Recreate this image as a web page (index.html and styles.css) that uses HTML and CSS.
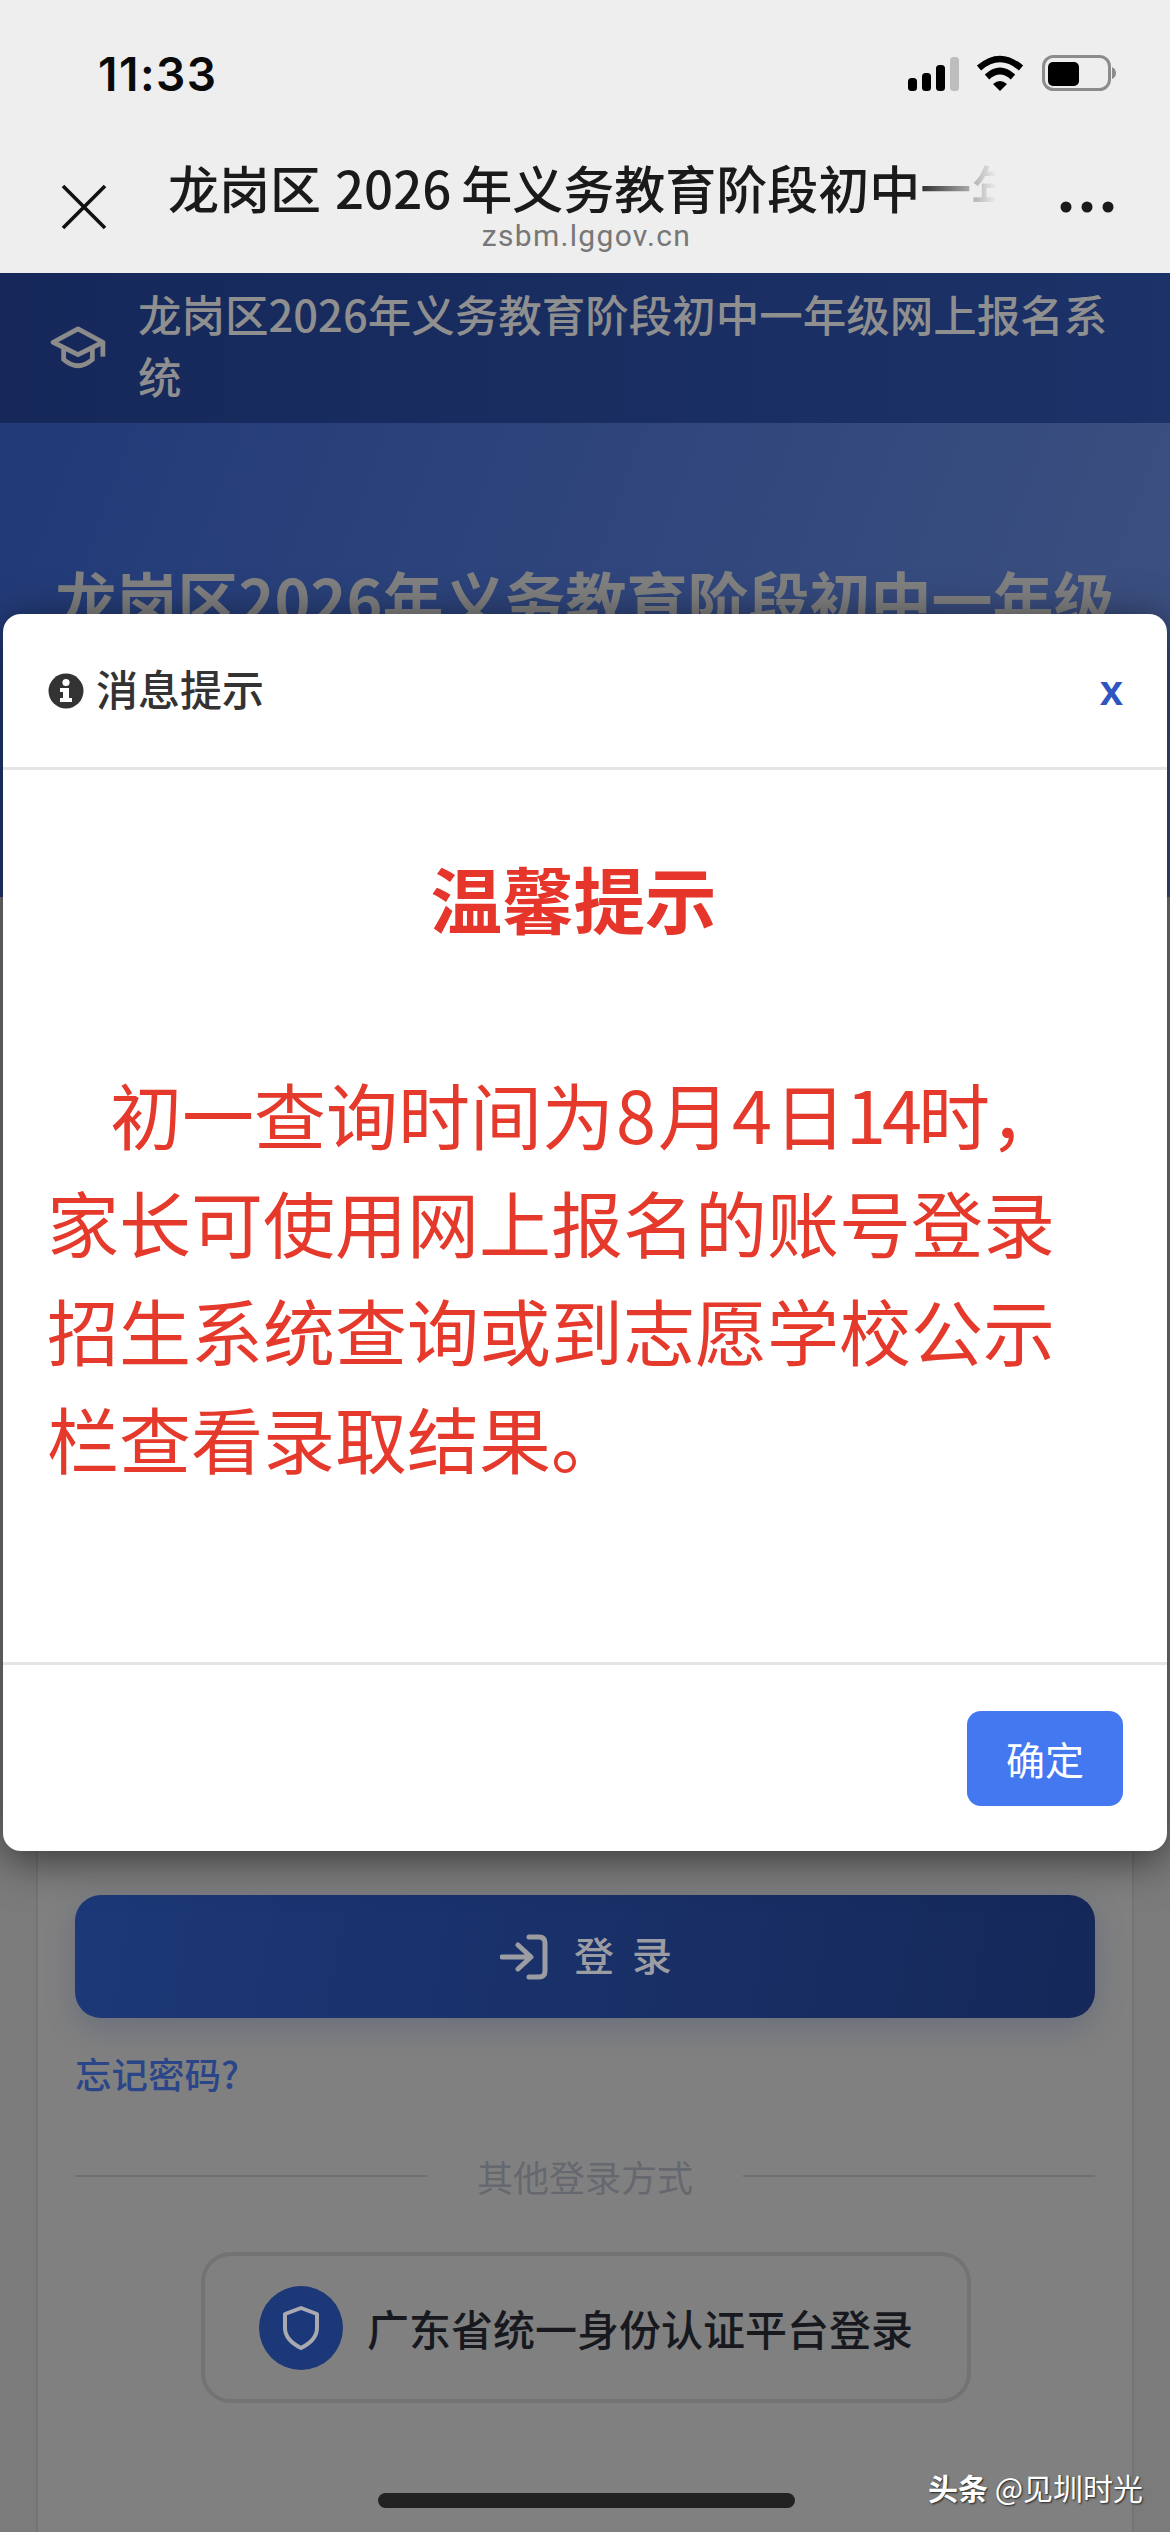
FILE: index.html
```html
<!DOCTYPE html>
<html lang="zh-CN">
<head>
  <meta charset="UTF-8" />
  <meta name="viewport" content="width=device-width, initial-scale=1.0"/>
  <title>龙岗区2026年义务教育阶段初中一年级网上报名系统</title>
  <link rel="stylesheet" href="styles.css">
</head>
<body>
  <div class="phone-top">
    <div class="status-bar">
      <span class="time">11:33</span>
      <div class="status-icons">
        <svg class="signal" width="51" height="34" viewBox="0 0 51 34">
          <rect x="0" y="21" width="9" height="13" rx="3.5" fill="#000"/>
          <rect x="14" y="16" width="9" height="18" rx="3.5" fill="#000"/>
          <rect x="28" y="8" width="9" height="26" rx="3.5" fill="#000"/>
          <rect x="42" y="0" width="9" height="34" rx="3.5" fill="#bdbdbd"/>
        </svg>
        <svg class="wifi" width="48" height="36" viewBox="0 0 48 36">
          <path d="M3 13Q24 -5 45 13" fill="none" stroke="#000" stroke-width="6.5"/>
          <path d="M11 22Q24 10 37 22" fill="none" stroke="#000" stroke-width="6.5"/>
          <path d="M17 29Q24 23 31 29L24 36Z" fill="#000"/>
        </svg>
        <svg class="battery" width="75" height="36" viewBox="0 0 75 36">
          <rect x="1.5" y="1.5" width="66" height="33" rx="10" fill="none" stroke="#8c8c8c" stroke-width="3"/>
          <rect x="6" y="7" width="31" height="24" rx="5" fill="#000"/>
          <path d="M70 12Q74 14 74 18Q74 22 70 24Z" fill="#8c8c8c"/>
        </svg>
      </div>
    </div>
    <div class="nav-bar">
      <svg class="nav-close" width="46" height="46" viewBox="0 0 46 46">
        <path d="M2 2L44 44M44 2L2 44" fill="none" stroke="#111" stroke-width="3.6"/>
      </svg>
      <div class="nav-center">
        <div class="nav-title">龙岗区<span class="nav-num">2026</span>年义务教育阶段初中一年级网上报名系统</div>
        <div class="nav-url">zsbm.lggov.cn</div>
      </div>
      <svg class="nav-more" width="58" height="12" viewBox="0 0 58 12">
        <circle cx="6" cy="6" r="5.5" fill="#1a1a1a"/>
        <circle cx="27" cy="6" r="5.5" fill="#1a1a1a"/>
        <circle cx="48" cy="6" r="5.5" fill="#1a1a1a"/>
      </svg>
    </div>
  </div>

  <div class="webview">
    <header class="site-header">
      <svg class="cap-icon" width="56" height="44" viewBox="0 0 58 46">
        <path d="M29 3L55 17L29 30L3 17Z" fill="none" stroke="#8b8b8b" stroke-width="5" stroke-linejoin="round"/>
        <path d="M14 24V35Q29 48 44 35V24" fill="none" stroke="#8b8b8b" stroke-width="5"/>
        <path d="M55 17V32" fill="none" stroke="#8b8b8b" stroke-width="5"/>
      </svg>
      <div class="site-name">龙岗区2026年义务教育阶段初中一年级网上报名系统</div>
    </header>

    <section class="hero">
      <h1 class="hero-title">龙岗区2026年义务教育阶段初中一年级网上报名系统</h1>
    </section>

    <main class="login-card">
      <button class="login-btn" type="button">
        <svg width="48" height="46" viewBox="0 0 48 46">
          <path d="M2 23H30M18 11L31 23L18 35" fill="none" stroke="#9c9da3" stroke-width="5" stroke-linecap="round" stroke-linejoin="round"/>
          <path d="M29 3H39Q45 3 45 9V37Q45 43 39 43H29" fill="none" stroke="#9c9da3" stroke-width="5" stroke-linecap="round"/>
        </svg>
        <span class="login-text">登录</span>
      </button>
      <a class="forgot" href="#">忘记密码?</a>
      <div class="divider"><span>其他登录方式</span></div>
      <button class="alt-login" type="button">
        <span class="shield-badge">
          <svg width="38" height="46" viewBox="0 0 38 46">
            <path d="M19 3L35 9V23Q35 35 19 43Q3 35 3 23V9Z" fill="none" stroke="#a8aab0" stroke-width="4" stroke-linejoin="round"/>
          </svg>
        </span>
        <span>广东省统一身份认证平台登录</span>
      </button>
    </main>

    <div class="modal">
      <div class="modal-head">
        <div class="modal-heading">
          <svg width="36" height="36" viewBox="0 0 36 36">
            <circle cx="18" cy="18" r="17.5" fill="#333"/>
            <circle cx="18" cy="9.5" r="3.6" fill="#fff"/>
            <path d="M12 15H21V25H24V29H12V25H15V19H12Z" fill="#fff"/>
          </svg>
          <span class="heading-text">消息提示</span>
        </div>
        <a class="modal-close" href="#">x</a>
      </div>
      <div class="modal-body">
        <h2 class="notice-title">温馨提示</h2>
        <p class="notice-text">初一查询时间为<span class="num">8</span>月<span class="num">4</span>日<span class="num-wide">14</span>时，<br>家长可使用网上报名的账号登录招生系统查询或到志愿学校公示栏查看录取结果。</p>
      </div>
      <div class="modal-foot">
        <button class="ok-btn" type="button">确定</button>
      </div>
    </div>

    <div class="home-bar"></div>
    <div class="watermark"><b>头条</b> @见圳时光</div>
  </div>
</body>
</html>
```

FILE: styles.css
```css
* {
  box-sizing: border-box;
}
html, body {
  margin: 0;
  height: 2532px;
  overflow: hidden;
}
body {
  font-family: "Noto Sans CJK SC", "Noto Sans", sans-serif;
  background: #7b7b7b;
}
svg {
  display: block;
}
button {
  font-family: inherit;
  border: none;
  padding: 0;
}
a {
  text-decoration: none;
}

.phone-top {
  height: 273px;
  background: #eeeeee;
}
.status-bar {
  height: 130px;
  padding: 51px 53px 0 98px;
  display: flex;
  justify-content: space-between;
  align-items: flex-start;
}
.time {
  font-family: Inter, sans-serif;
  font-size: 46px;
  font-weight: 600;
  line-height: 46px;
  letter-spacing: 1.5px;
  color: #0a0a0a;
}
.status-icons {
  display: flex;
  align-items: flex-end;
  height: 40px;
}
.wifi {
  margin-left: 17px;
}
.battery {
  margin-left: 18px;
}

.nav-bar {
  height: 143px;
  display: grid;
  grid-template-columns: 168px 837px 165px;
}
.nav-close {
  margin: 54px 0 0 61px;
}
.nav-center {
  padding-top: 27px;
  text-align: center;
  min-width: 0;
}
.nav-title {
  font-size: 51px;
  font-weight: 500;
  line-height: 60px;
  color: #1a1a1a;
  white-space: nowrap;
  overflow: hidden;
  -webkit-mask-image: linear-gradient(to right, #000 89%, transparent 99%);
  mask-image: linear-gradient(to right, #000 89%, transparent 99%);
  text-align: left;
}
.nav-num {
  margin: 0 10px 0 14px;
}
.nav-url {
  font-family: Roboto, sans-serif;
  font-size: 30px;
  line-height: 36px;
  letter-spacing: 1.3px;
  margin-top: 1px;
  color: #777;
}
.nav-more {
  margin: 71px 0 0 55px;
}

.webview {
  position: relative;
  height: 2259px;
  overflow: hidden;
}
.site-header {
  height: 150px;
  padding-left: 50px;
  display: flex;
  align-items: center;
  gap: 32px;
  background: linear-gradient(90deg, #16285a, #1c3268);
}
.cap-icon {
  flex: none;
}
.site-name {
  font-size: 43.5px;
  font-weight: 500;
  line-height: 62px;
  color: #8f8f8f;
  padding: 0 50px 6px 0;
}
.hero {
  height: 474px;
  padding: 140px 30px 0;
  background: linear-gradient(110deg, #213a78, #3e5180);
}
.hero-title {
  margin: 0;
  font-size: 61px;
  font-weight: 700;
  line-height: 70px;
  text-align: center;
  color: #808080;
}

.login-card {
  margin: -80px 36px 0;
  height: 1800px;
  padding: 1078px 37px 0;
  background: #808080;
  border-left: 2px solid #747474;
  border-right: 2px solid #747474;
}
.login-btn {
  width: 100%;
  height: 123px;
  padding-left: 20px;
  display: flex;
  justify-content: center;
  align-items: center;
  gap: 26px;
  border-radius: 26px;
  background: linear-gradient(100deg, #1d3878, #152859);
  box-shadow: 0 10px 30px rgba(40, 60, 110, 0.25);
  color: #9c9da3;
  font-size: 40px;
  font-weight: 500;
  letter-spacing: 18px;
}
.login-text {
  padding-bottom: 6px;
}
.forgot {
  display: block;
  margin-top: 30px;
  font-size: 36.5px;
  font-weight: 500;
  line-height: 52px;
  color: #2b4688;
}
.divider {
  margin-top: 50px;
  display: flex;
  align-items: center;
  gap: 50px;
  font-size: 36px;
  line-height: 52px;
  color: #66686f;
}
.divider::before, .divider::after {
  content: "";
  flex: 1;
  height: 2px;
  background: #707070;
}
.alt-login {
  display: flex;
  align-items: center;
  gap: 24px;
  width: 770px;
  height: 151px;
  margin: 50px 0 0 126px;
  padding-left: 54px;
  border: 4px solid #737373;
  border-radius: 30px;
  background: transparent;
  font-size: 42px;
  font-weight: 500;
  color: #17191f;
}
.shield-badge {
  width: 84px;
  height: 84px;
  flex: none;
  display: flex;
  align-items: center;
  justify-content: center;
  border-radius: 50%;
  background: #1d3878;
}

.modal {
  position: absolute;
  top: 341px;
  left: 3px;
  right: 3px;
  height: 1237px;
  background: #fff;
  border-radius: 18px;
  box-shadow: 0 8px 44px rgba(0, 0, 0, 0.6);
}
.modal-head {
  height: 156px;
  padding: 0 44px 0 45px;
  display: flex;
  justify-content: space-between;
  align-items: center;
  border-bottom: 3px solid #e5e5e5;
}
.modal-heading {
  display: flex;
  align-items: center;
  gap: 12px;
  font-size: 42px;
  font-weight: 500;
  color: #333;
}
.heading-text {
  padding-bottom: 6px;
}
.modal-close {
  font-family: "Liberation Sans", sans-serif;
  font-size: 42px;
  font-weight: 700;
  color: #2f55c0;
}
.modal-body {
  height: 895px;
  padding: 75px 47px 0 44px;
  border-bottom: 3px solid #e5e5e5;
}
.notice-title {
  margin: 0 20px 109px 0;
  font-size: 71.5px;
  font-weight: 700;
  line-height: 105px;
  text-align: center;
  color: #e6352a;
}
.notice-text {
  margin: 0;
  font-size: 72px;
  line-height: 108px;
  text-indent: 63px;
  color: #e5392b;
}
.num {
  margin: 0 2px;
}
.num-wide {
  letter-spacing: -4px;
}
.modal-foot {
  padding: 46px 44px 0 0;
  display: flex;
  justify-content: flex-end;
}
.ok-btn {
  width: 156px;
  height: 95px;
  padding-bottom: 2px;
  border-radius: 14px;
  background: #4378f0;
  color: #fff;
  font-size: 39px;
}

.home-bar {
  position: absolute;
  left: 378px;
  top: 2220px;
  width: 417px;
  height: 15px;
  border-radius: 8px;
  background: #222;
}
.watermark {
  position: absolute;
  left: 928px;
  top: 2193px;
  font-size: 30px;
  line-height: 42px;
  color: #fff;
  white-space: nowrap;
  text-shadow: 1px 1px 2px #222;
}
.watermark b {
  font-weight: 700;
}
```
